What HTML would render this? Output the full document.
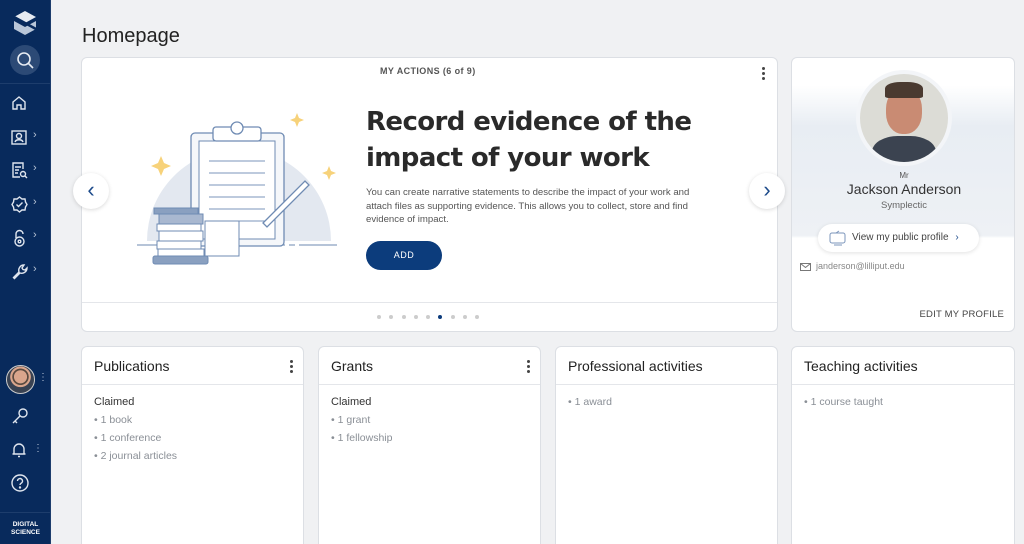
<!DOCTYPE html>
<html><head><meta charset="utf-8"><style>
*{box-sizing:border-box;margin:0;padding:0}
html,body{width:1024px;height:544px;overflow:hidden}
body{background:#f0f1f3;font-family:"Liberation Sans",sans-serif;position:relative;color:#333}
.sb{position:absolute;left:0;top:0;width:51px;height:544px;background:#082a5c;border-right:1px solid #1d3d6c}
.ic{position:absolute;left:11px}
.chev{position:absolute;left:33px;color:#b8c4d6;font-size:11px}
.card{position:absolute;background:#fff;border:1px solid #dcdfe4;border-radius:6px;overflow:hidden}
h1{position:absolute;left:82px;top:25px;font-size:20px;font-weight:normal;color:#222}
.bc h3{font-size:14px;font-weight:normal;color:#222;padding:11px 12px;border-bottom:1px solid #e4e6ea;height:38px}
.bc .b{padding:8px 12px;font-size:10.5px;color:#8a8f96;line-height:18px}
.bc .b b{font-weight:normal;color:#333;font-size:11px}
.dots3{position:absolute;right:10px;top:12px;width:3px}
.dots3 i{display:block;width:3px;height:3px;background:#444;border-radius:50%;margin-bottom:2px}
</style></head><body>
<div class="sb">
<svg class="ic" style="left:13px;top:10px" width="24" height="26" viewBox="0 0 24 26"><path d="M12 1 23 7 12 13 1 7Z" fill="#e6ebf2"/><path d="M1 11 12 17 23 11 23 19 12 25 1 19Z" fill="#b9c6d8"/><path d="M1 7 12 13 23 19" stroke="#082a5c" stroke-width="2.5" fill="none"/></svg>
<div style="position:absolute;left:10px;top:45px;width:30px;height:30px;border-radius:50%;background:#2c4a76"></div>
<svg class="ic" style="left:16px;top:51px" width="19" height="19" viewBox="0 0 19 19" fill="none" stroke="#e6ebf2" stroke-width="1.6"><circle cx="8" cy="8" r="6"/><path d="M12.5 12.5 17 17"/></svg>
<div style="position:absolute;left:0;top:83px;width:51px;border-top:1px solid #1d3d6c"></div>
<svg class="ic" style="top:95px" width="16" height="16" viewBox="0 0 16 16" fill="none" stroke="#dfe5ee" stroke-width="1.4"><path d="M2 7 8 2 14 7V14H10V10H6V14H2Z"/></svg>
<svg class="ic" style="top:129px" width="17" height="16" viewBox="0 0 17 16" fill="none" stroke="#dfe5ee" stroke-width="1.4"><rect x="1" y="2" width="14" height="13"/><circle cx="8" cy="7" r="2.5"/><path d="M4 13c1-3 7-3 8 0"/></svg><span class="chev" style="top:129px">›</span>
<svg class="ic" style="top:162px" width="17" height="17" viewBox="0 0 17 17" fill="none" stroke="#dfe5ee" stroke-width="1.4"><path d="M9 15H2V1h10v6"/><path d="M4 5h6M4 8h4M4 11h3"/><circle cx="12" cy="12" r="2.5"/><path d="M14 14l2 2"/></svg><span class="chev" style="top:162px">›</span>
<svg class="ic" style="top:196px" width="17" height="17" viewBox="0 0 17 17" fill="none" stroke="#dfe5ee" stroke-width="1.4"><path d="M8.5 1 11 3 14 3 14.5 6 16 8.5 14.5 11 14 14 11 14 8.5 16 6 14 3 14 2.5 11 1 8.5 2.5 6 3 3 6 3Z"/><path d="M5.5 8.5 7.5 10.5 11.5 6.5"/></svg><span class="chev" style="top:196px">›</span>
<svg class="ic" style="top:229px" width="17" height="18" viewBox="0 0 17 18" fill="none" stroke="#dfe5ee" stroke-width="1.4"><path d="M5 9V5a3.5 3.5 0 0 1 7 0"/><circle cx="8.5" cy="12.5" r="4.5"/><circle cx="8.5" cy="12.5" r="1.3"/></svg><span class="chev" style="top:229px">›</span>
<svg class="ic" style="top:263px" width="17" height="17" viewBox="0 0 17 17" fill="none" stroke="#dfe5ee" stroke-width="1.4"><path d="M2 15 8 9M8 9c-1-3 1-7 5-7l-2 3 1 1.5 2 .5 2-2c0 4-4 6-7 5l-6 6z"/></svg><span class="chev" style="top:263px">›</span>
<div style="position:absolute;left:6px;top:365px;width:29px;height:29px;border-radius:50%;background:radial-gradient(circle at 50% 40%,#d9a58c 0 30%,#5a4a40 32% 38%,#d9a58c 40% 48%,#394252 50%);border:1px solid #ccc"></div>
<span style="position:absolute;left:38px;top:372px;color:#b8c4d6;font-size:10px">⋮</span>
<svg class="ic" style="top:407px" width="18" height="18" viewBox="0 0 18 18" fill="none" stroke="#dfe5ee" stroke-width="1.4"><circle cx="12" cy="6" r="4"/><path d="M9 9 2 16M4 14l2 2"/></svg>
<svg class="ic" style="top:441px" width="17" height="17" viewBox="0 0 17 17" fill="none" stroke="#dfe5ee" stroke-width="1.4"><path d="M3 13V8a5 5 0 0 1 10 0v5H3zM1.5 13h13M7 15.5h2"/></svg><span style="position:absolute;left:33px;top:443px;color:#b8c4d6;font-size:10px">⋮</span>
<svg class="ic" style="top:474px" width="18" height="18" viewBox="0 0 18 18" fill="none" stroke="#dfe5ee" stroke-width="1.4"><circle cx="9" cy="9" r="8"/><path d="M6.5 7a2.5 2.5 0 1 1 3.5 2.3c-.7.4-1 .9-1 1.7"/><circle cx="9" cy="13.5" r=".5" fill="#dfe5ee"/></svg>
<div style="position:absolute;left:0;top:512px;width:51px;border-top:1px solid #1d3d6c"></div>
<div style="position:absolute;left:0;top:521px;width:51px;text-align:center;color:#fff;font-size:6.5px;font-weight:bold;line-height:8px">DIGITAL<br>SCIENCE</div>
</div>

<h1>Homepage</h1>

<div class="card" style="left:81px;top:57px;width:697px;height:275px">
<div style="position:absolute;left:298px;top:8px;font-size:9px;font-weight:bold;color:#555;letter-spacing:.4px">MY ACTIONS (6 of 9)</div>
<div class="dots3" style="right:12px;top:9px"><i></i><i></i><i></i></div>
<svg style="position:absolute;left:52px;top:51px" width="210" height="160" viewBox="133 108 210 160">
<path d="M146 240a92 92 0 0 1 184 0z" fill="#e3e8f0"/>
<path d="M136 244h200" stroke="#8aa0c0" stroke-width="1.2" stroke-dasharray="40 4 6 4"/>
<rect x="190" y="132" width="93" height="113" rx="4" fill="#f5f7fa" stroke="#6f8bb3" stroke-width="1.3"/>
<rect x="198" y="140" width="76" height="98" fill="#fff" stroke="#6f8bb3"/>
<rect x="212" y="126" width="48" height="14" rx="3" fill="#fff" stroke="#6f8bb3" stroke-width="1.3"/>
<circle cx="236" cy="127" r="6" fill="#fff" stroke="#6f8bb3" stroke-width="1.3"/>
<path d="M208 160h56M208 172h56M208 184h56M208 196h56M208 208h56M208 220h56" stroke="#7b95bb"/>
<path d="M262 222 304 180 308 184 266 226z" fill="#fff" stroke="#6f8bb3" stroke-width="1.3"/>
<path d="M160 155l3 7 7 3-7 3-3 7-3-7-7-3 7-3zM296 112l2 5 5 2-5 2-2 5-2-5-5-2 5-2zM328 165l2 5 5 2-5 2-2 5-2-5-5-2 5-2z" fill="#f7d27a"/>
<rect x="204" y="220" width="34" height="35" fill="#fff" stroke="#6f8bb3"/>
<rect x="153" y="207" width="44" height="6" fill="#8aa0c0" stroke="#6f8bb3"/>
<rect x="158" y="213" width="44" height="10" fill="#a9b8d0" stroke="#6f8bb3"/>
<rect x="156" y="223" width="44" height="7" fill="#fff" stroke="#6f8bb3"/>
<rect x="158" y="230" width="44" height="10" fill="#fff" stroke="#6f8bb3"/>
<rect x="156" y="240" width="44" height="8" fill="#fff" stroke="#6f8bb3"/>
<rect x="152" y="255" width="55" height="8" rx="2" fill="#8aa0c0" stroke="#6f8bb3"/>
<rect x="157" y="248" width="46" height="7" fill="#fff" stroke="#6f8bb3"/>
</svg>
<div style="position:absolute;left:284px;top:46px;font-size:26px;font-weight:bold;color:#2a2a2a;line-height:36px;font-family:'DejaVu Sans',sans-serif;letter-spacing:-.6px">Record evidence of the<br>impact of your work</div>
<div style="position:absolute;left:284px;top:128px;width:350px;font-size:9.6px;color:#555;line-height:13.5px">You can create narrative statements to describe the impact of your work and attach files as supporting evidence. This allows you to collect, store and find evidence of impact.</div>
<div style="position:absolute;left:284px;top:183px;width:76px;height:29px;border-radius:15px;background:#0c3c7c;color:#fff;font-size:9px;text-align:center;line-height:29px;letter-spacing:.5px">ADD</div>
<div style="position:absolute;left:0;top:244px;width:697px;border-top:1px solid #e4e6ea"></div>
<div style="position:absolute;left:295px;top:257px;display:flex;gap:8.3px"><i style="width:4px;height:4px;border-radius:50%;background:#ccc"></i><i style="width:4px;height:4px;border-radius:50%;background:#ccc"></i><i style="width:4px;height:4px;border-radius:50%;background:#ccc"></i><i style="width:4px;height:4px;border-radius:50%;background:#ccc"></i><i style="width:4px;height:4px;border-radius:50%;background:#ccc"></i><i style="width:4px;height:4px;border-radius:50%;background:#0c3c7c"></i><i style="width:4px;height:4px;border-radius:50%;background:#ccc"></i><i style="width:4px;height:4px;border-radius:50%;background:#ccc"></i><i style="width:4px;height:4px;border-radius:50%;background:#ccc"></i></div>
</div>
<div style="position:absolute;left:73px;top:173px;width:36px;height:36px;border-radius:50%;background:#fff;box-shadow:0 1px 4px rgba(0,0,0,.15);color:#1c4a8a;font-size:22px;text-align:center;line-height:34px">‹</div>
<div style="position:absolute;left:749px;top:173px;width:36px;height:36px;border-radius:50%;background:#fff;box-shadow:0 1px 4px rgba(0,0,0,.15);color:#1c4a8a;font-size:22px;text-align:center;line-height:34px">›</div>

<div class="card" style="left:791px;top:57px;width:224px;height:275px;background:linear-gradient(#fff 0,#fff 10%,#e8edf3 25%,#eef1f5 65%,#fff 66%)">
<div style="position:absolute;left:64px;top:12px;width:96px;height:96px;border-radius:50%;background:#f3f5f8"></div>
<div style="position:absolute;left:68px;top:16px;width:88px;height:88px;border-radius:50%;overflow:hidden;background:#dcdcd6">
<div style="position:absolute;left:26px;top:14px;width:36px;height:46px;border-radius:45%;background:#c98b73"></div>
<div style="position:absolute;left:25px;top:8px;width:38px;height:16px;border-radius:40% 40% 10% 10%;background:#4a3a30"></div>
<div style="position:absolute;left:12px;top:62px;width:64px;height:40px;border-radius:40% 40% 0 0;background:#3b4350"></div>
</div>
<div style="width:224px;text-align:center;position:absolute;top:113px;font-size:8px;color:#555">Mr</div>
<div style="width:224px;text-align:center;position:absolute;top:123px;font-size:14px;color:#333">Jackson Anderson</div>
<div style="width:224px;text-align:center;position:absolute;top:142px;font-size:9.5px;color:#666">Symplectic</div>
<div style="position:absolute;left:26px;top:166px;width:161px;height:28px;border-radius:14px;background:#fff;box-shadow:0 1px 4px rgba(0,0,0,.12);font-size:10px;color:#444;line-height:28px;padding-left:34px">View my public profile <span style="color:#1c4a8a;margin-left:4px">›</span>
<svg style="position:absolute;left:10px;top:6px" width="20" height="16" viewBox="0 0 20 16" fill="none" stroke="#7b95bb"><rect x="2" y="3" width="15" height="10" rx="2"/><path d="M6 15h8M8 3l3-2"/></svg></div>
<svg style="position:absolute;left:8px;top:205px" width="11" height="8" viewBox="0 0 11 8" fill="none" stroke="#777"><rect x=".5" y=".5" width="10" height="7"/><path d="M.5.5 5.5 4.5 10.5.5"/></svg>
<div style="position:absolute;left:24px;top:203px;font-size:9px;color:#888">janderson@lilliput.edu</div>
<div style="position:absolute;right:10px;top:251px;font-size:9.5px;color:#444;letter-spacing:.2px">EDIT MY PROFILE</div>
</div>

<div class="card bc" style="left:81px;top:346px;width:223px;height:210px"><h3>Publications</h3><div class="dots3" style="top:13px"><i></i><i></i><i></i></div><div class="b"><b>Claimed</b><br>• 1 book<br>• 1 conference<br>• 2 journal articles</div></div>
<div class="card bc" style="left:318px;top:346px;width:223px;height:210px"><h3>Grants</h3><div class="dots3" style="top:13px"><i></i><i></i><i></i></div><div class="b"><b>Claimed</b><br>• 1 grant<br>• 1 fellowship</div></div>
<div class="card bc" style="left:555px;top:346px;width:223px;height:210px"><h3>Professional activities</h3><div class="b">• 1 award</div></div>
<div class="card bc" style="left:791px;top:346px;width:224px;height:210px"><h3>Teaching activities</h3><div class="b">• 1 course taught</div></div>
</body></html>
